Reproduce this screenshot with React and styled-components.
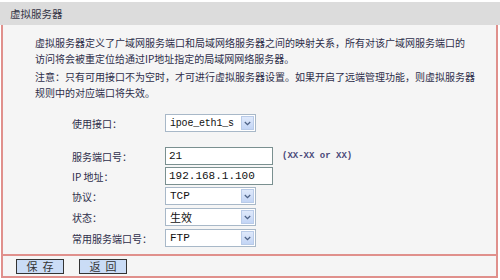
import { createGlobalStyle, styled } from 'styled-components';

const Global = createGlobalStyle`
    html, body { margin: 0; padding: 0; background: #ffffff; }
    body { font-family: "Noto Sans CJK SC", "Liberation Sans", sans-serif; }
`;

const StyledPage = styled.div`
    width: 500px;
    height: 280px;
    display: flex;
    flex-direction: column;
    background: #ffffff;
`;

const StyledHeader = styled.div`
    height: 23px;
    margin-top: 2px;
    display: flex;
    align-items: center;
    padding-left: 10px;
    background: #dcdcdc;
    color: #333344;
    font-size: 10.5px;
`;

const StyledPanel = styled.div`
    flex: 1;
    display: flex;
    flex-direction: column;
    margin: 0 2px 2px 1px;
    border-left: 2px solid #e0908c;
    border-right: 2px solid #e0908c;
    border-bottom: 2px solid #e0908c;
    background: #f5f5f5;
`;

const StyledBody = styled.div`
    flex: 1;
    padding: 10px 0 0 32px;
`;

const StyledPara = styled.div`
    margin: 0 0 ${props => props.gap}px 0;
    font-size: 10px;
    line-height: 16px;
    color: #2e2e4a;
    white-space: nowrap;
`;

const StyledForm = styled.div`
    display: grid;
    grid-template-columns: 93px auto;
    align-items: center;
    padding-left: 37px;
    margin-top: 13px;
`;

const StyledLabel = styled.div`
    font-size: 10px;
    color: #2e2e4a;
    white-space: nowrap;
    height: 18px;
    display: flex;
    align-items: center;
    margin-top: ${props => props.mt || 0}px;
`;

const StyledCell = styled.div`
    display: flex;
    align-items: center;
    gap: 9px;
    height: 18px;
    margin-top: ${props => props.mt || 0}px;
`;

const StyledInput = styled.div`
    box-sizing: border-box;
    width: 108px;
    height: 18px;
    border: 1px solid #7a9090;
    background: #ffffff;
    font-family: "Liberation Mono", monospace;
    font-size: 11px;
    color: #111;
    display: flex;
    align-items: center;
    padding-left: 3px;
`;

const StyledSelect = styled.div`
    box-sizing: border-box;
    width: 91px;
    height: 18px;
    border: 1px solid #a8b8c8;
    background: #ffffff;
    display: flex;
    align-items: center;
    justify-content: space-between;
    padding: 0 1px 0 4px;
    font-family: "Liberation Mono", "Noto Sans CJK SC", monospace;
    font-size: ${props => props.fs || 11}px;
    letter-spacing: ${props => props.ls || 0}px;
    color: #111;
`;

const StyledArrow = styled.div`
    width: 13px;
    height: 14px;
    background: linear-gradient(#dfe9fb, #c3d5f5);
    border: 1px solid #b9cbe8;
    box-sizing: border-box;
    display: flex;
    align-items: center;
    justify-content: center;
`;

const StyledHint = styled.span`
    font-family: "Liberation Mono", monospace;
    font-size: 9px;
    font-weight: bold;
    color: #4a4a7a;
`;

const StyledFooter = styled.div`
    height: 20px;
    border-top: 2px solid #e0908c;
    display: flex;
    align-items: center;
    gap: 15px;
    padding-left: 13px;
`;

const StyledButton = styled.button`
    box-sizing: border-box;
    width: 48px;
    height: 15px;
    padding: 0;
    border: 1px solid #333;
    background: #cadcf6;
    font-family: "Noto Sans CJK SC", sans-serif;
    font-size: 11px;
    line-height: 13px;
    letter-spacing: 5px;
    text-indent: 5px;
    color: #333;
`;

const Arrow = () => (
    <StyledArrow>
        <svg width="7" height="5" viewBox="0 0 7 5">
            <path d="M0.8 1 L3.5 3.6 L6.2 1" fill="none" stroke="#4d6185" strokeWidth="1.3" />
        </svg>
    </StyledArrow>
);

const rows = [
    { label: "服务端口号：", kind: "input", value: "21", hint: "(XX-XX or XX)", mt: 15 },
    { label: "IP 地址：", kind: "input", value: "192.168.1.100", mt: 2 },
    { label: "协议：", kind: "select", value: "TCP", mt: 2 },
    { label: "状态：", kind: "select", value: "生效", fs: 11, mt: 3 },
    { label: "常用服务端口号：", kind: "select", value: "FTP", mt: 3 },
];

const FormRow = ({ item }) => (
    <>
        <StyledLabel mt={item.mt}>{item.label}</StyledLabel>
        <StyledCell mt={item.mt}>
            {item.kind === "input" ? (
                <StyledInput>{item.value}</StyledInput>
            ) : (
                <StyledSelect fs={item.fs}>
                    <span>{item.value}</span>
                    <Arrow />
                </StyledSelect>
            )}
            {item.hint && <StyledHint>{item.hint}</StyledHint>}
        </StyledCell>
    </>
);

const App = () => {
    return (
        <StyledPage>
            <Global />
            <StyledHeader>虚拟服务器</StyledHeader>
            <StyledPanel>
                <StyledBody>
                    <StyledPara gap={2}>
                        虚拟服务器定义了广域网服务端口和局域网络服务器之间的映射关系，所有对该广域网服务端口的<br />
                        访问将会被重定位给通过IP地址指定的局域网网络服务器。
                    </StyledPara>
                    <StyledPara gap={0}>
                        注意：只有可用接口不为空时，才可进行虚拟服务器设置。如果开启了远端管理功能，则虚拟服务器<br />
                        规则中的对应端口将失效。
                    </StyledPara>
                    <StyledForm>
                        <StyledLabel>使用接口：</StyledLabel>
                        <StyledCell>
                            <StyledSelect fs={10} ls={-0.2}>
                                <span>ipoe_eth1_s</span>
                                <Arrow />
                            </StyledSelect>
                        </StyledCell>
                        {rows.map((item) => <FormRow key={item.label} item={item} />)}
                    </StyledForm>
                </StyledBody>
                <StyledFooter>
                    <StyledButton>保存</StyledButton>
                    <StyledButton>返回</StyledButton>
                </StyledFooter>
            </StyledPanel>
        </StyledPage>
    );
};

export default App;
